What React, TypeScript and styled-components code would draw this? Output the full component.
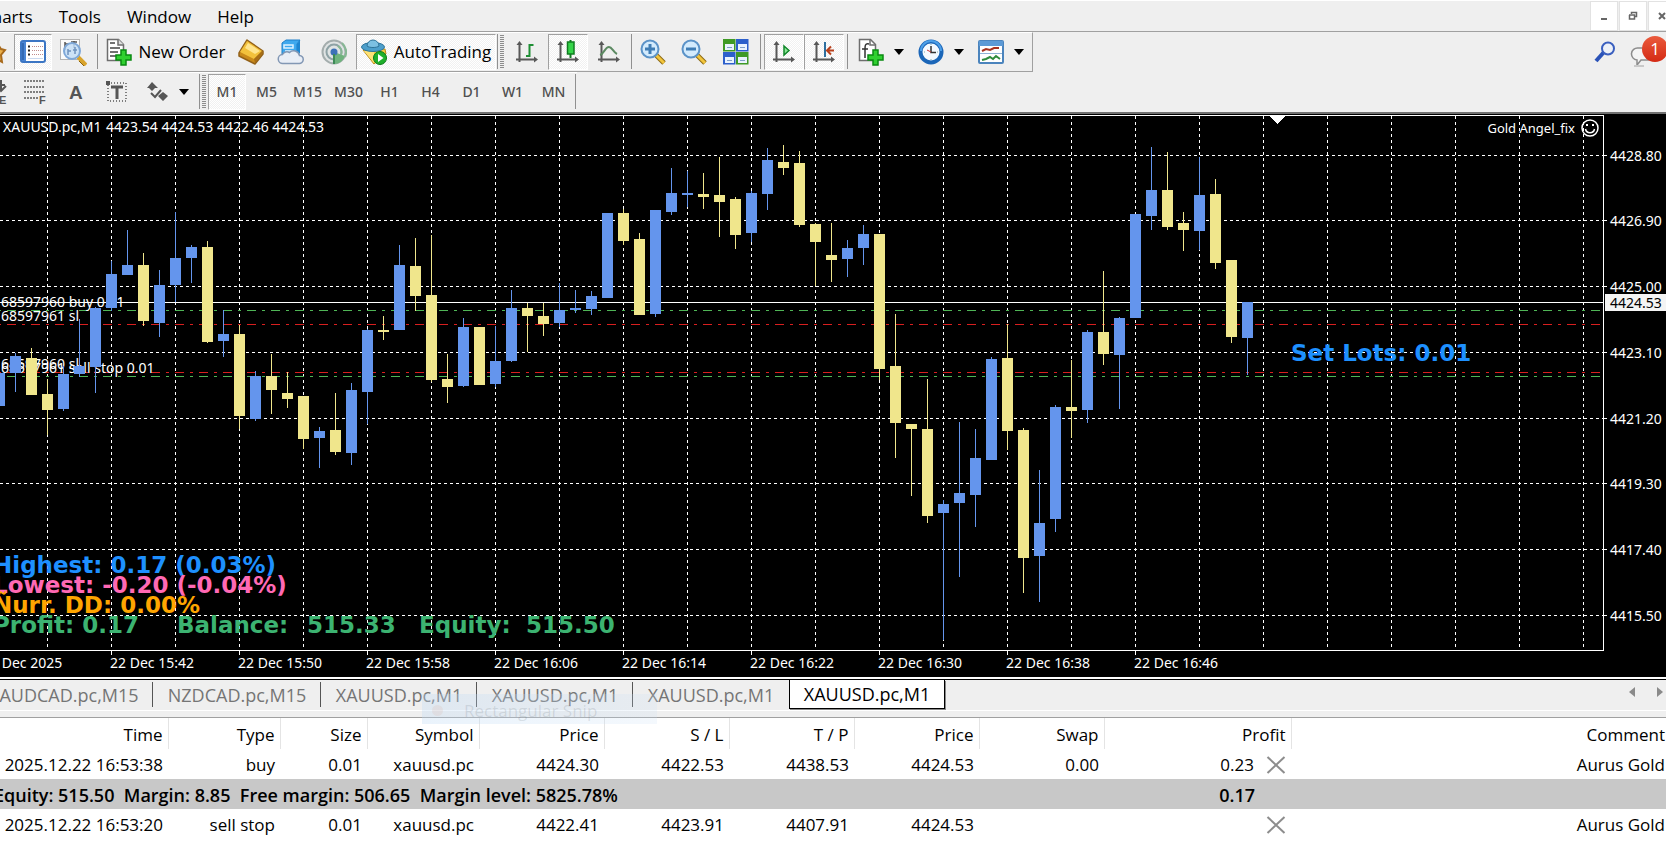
import React from "react";
import styled, { createGlobalStyle, css } from "styled-components";

const UI = `"Open Sans", "Noto Sans", sans-serif`;
const CHART = `"Noto Sans", "DejaVu Sans", sans-serif`;
const HEAVY = `"DejaVu Sans", "Liberation Sans", sans-serif`;

const Global = createGlobalStyle`
  * { box-sizing: border-box; }
  body { margin: 0; background: #fff; font-family: ${UI}; font-size: 17px; color: #000; overflow-x: hidden; }
  button { font: inherit; color: inherit; background: none; border: 0; padding: 0; margin: 0; }
  svg { display: block; flex: none; }
`;

const Page = styled.div`
  display: flex;
  flex-direction: column;
  min-height: 100vh;
  overflow: hidden;
`;

/* ---------- menu bar ---------- */

const MenuBar = styled.header`
  display: flex;
  justify-content: space-between;
  height: 32px;
  background: #efefef;
  border-top: 1px solid #fff;
  border-bottom: 1px solid #a0a0a0;
`;

const Menu = styled.nav`
  display: flex;
  gap: 26px;
  margin-left: -19px;
  padding-top: 2px;
  align-items: center;
`;

const MenuItem = styled.button`
  line-height: 28px;
`;

const WindowButtons = styled.div`
  display: flex;
  gap: 3px;
  padding-top: 1px;
  margin-right: -9px;
`;

const WindowButton = styled.button`
  display: flex;
  align-items: center;
  justify-content: center;
  width: 26px;
  height: 28px;
  background: #fff;
  outline: 1px solid #e2e2e2;
`;

/* ---------- tool bars ---------- */

const ToolRow = styled.div`
  display: flex;
  justify-content: space-between;
  background: #efefef;
`;

const Tools = styled.div<{ $boxed?: boolean }>`
  display: flex;
  align-items: center;
  height: 40px;
  padding-bottom: 2px;
  border-top: 1px solid #fff;
  ${(p) => p.$boxed && css`padding-bottom: 1px; border-bottom: 1px solid #a0a0a0; border-right: 1px solid #a0a0a0; padding-right: 1px;`}
`;

const ToolButton = styled.button<{ $w?: number; $gap?: number; $pressed?: boolean }>`
  display: flex;
  align-items: center;
  justify-content: center;
  gap: ${(p) => p.$gap ?? 6}px;
  width: ${(p) => p.$w ?? 40}px;
  height: 36px;
  flex: none;
  white-space: nowrap;
  border: 1px solid transparent;
  ${(p) =>
    p.$pressed &&
    css`
      background: repeating-conic-gradient(#f1f1f1 0 25%, #fff 0 50%) 0 0 / 2px 2px;
      border-color: #a0a0a0 #fff #fff #a0a0a0;
    `}
`;

const PeriodButton = styled(ToolButton)`
  font: 500 14px ${CHART};
  color: #505050;
`;

const Divider = styled.span<{ $gap?: number }>`
  width: 1px;
  height: 35px;
  flex: none;
  margin: 0 ${(p) => p.$gap ?? 3}px;
  background: #909090;
`;

const Grip = styled.span`
  width: 4px;
  height: 34px;
  flex: none;
  margin: 0 2px 0 1px;
  background: repeating-linear-gradient(#8c8c8c 0 1px, #efefef 1px 2px);
`;

const RightTools = styled.div`
  display: flex;
  align-items: center;
  gap: 14px;
  height: 40px;
`;

const Notify = styled.button`
  position: relative;
  width: 36px;
  height: 32px;
`;

const Bubble = styled.span`
  display: block;
  padding-top: 10px;
`;

const Badge = styled.span`
  position: absolute;
  left: 12px;
  top: 0;
  width: 26px;
  height: 26px;
  border-radius: 50%;
  background: linear-gradient(#ea5a3c, #d42a14);
  color: #fff;
  font-size: 17px;
  line-height: 26px;
  text-align: center;
`;

/* ---------- chart ---------- */

const ChartFrame = styled.main`
  display: grid;
  grid-template-columns: minmax(0, 1fr) 63px;
  height: 567px;
  background: #000;
  border-top: 2px solid #707070;
  border-bottom: 2px solid #fff;
`;

const Plot = styled.div`
  position: relative;
  min-width: 0;
`;

const PlotHead = styled.div`
  position: absolute;
  right: 4px;
  top: 5px;
  display: flex;
  align-items: center;
  gap: 6px;
  font: 13px/18px ${CHART};
  color: #fff;
`;

const Fill = styled.svg`
  width: 100%;
  height: 563px;
`;

/* ---------- chart tabs ---------- */

const TabStrip = styled.div`
  display: flex;
  justify-content: space-between;
  height: 32px;
  background: #efefef;
  border-top: 1px solid #000;
  border-bottom: 1px solid #fff;
`;

const Tabs = styled.div`
  display: flex;
  margin-left: -15px;
`;

const Tab = styled.button<{ $w?: number; $active?: boolean }>`
  position: relative;
  width: ${(p) => p.$w ?? 156}px;
  height: 29px;
  font-size: 18px;
  line-height: 26px;
  color: ${(p) => (p.$active ? "#000" : "#757575")};
  ${(p) =>
    p.$active
      ? css`background: #fff; border: 1px solid #000; border-top: 0; box-shadow: 1px 1px 0 #888;`
      : css`&:not(:nth-last-child(2))::after { content: ""; position: absolute; right: 0; top: 2px; width: 1px; height: 25px; background: #555; }`}
`;

const TabScroll = styled.div`
  display: flex;
  align-items: center;
  gap: 22px;
  padding: 0 3px 6px 0;
`;

const SnipGhost = styled.div`
  position: absolute;
  left: 422px;
  top: 694px;
  width: 235px;
  height: 30px;
  padding-left: 42px;
  line-height: 34px;
  color: rgba(90, 100, 110, 0.17);
  background: linear-gradient(90deg, rgba(190, 218, 245, 0.32), rgba(200, 222, 245, 0.2));
  pointer-events: none;
  &::before { content: ""; position: absolute; left: 10px; top: 11px; width: 11px; height: 11px; border-radius: 50%; background: rgba(220, 170, 150, 0.16); }
`;

/* ---------- trade table ---------- */

const Terminal = styled.section`
  border-top: 1px solid #a0a0a0;
  margin-top: 6px;
  background: #fff;
`;

const Gap = styled.div`
  background: #efefef;
`;

const Trades = styled.table`
  width: 100%;
  table-layout: fixed;
  border-collapse: collapse;
  text-align: right;
  white-space: nowrap;
  th, td { height: 30px; padding: 2px 5px 0 0; font-weight: 400; line-height: 24px; }
  th { height: 31px; border-right: 1px solid #e4e4e4; }
  th:last-child { border-right: 0; }
  th:last-child, td:last-child { padding-right: 1px; }
`;

const SummaryRow = styled.tr`
  background: #c8c8c8;
  td { font-weight: 600; font-size: 18px; }
  td:first-child { text-align: left; text-indent: -6px; white-space: pre; }
  td:nth-child(2) { padding-right: 36px; }
`;

const ProfitCell = styled.div`
  display: flex;
  align-items: center;
  justify-content: flex-end;
  gap: 12px;
`;

/* ---------- icons ---------- */

const Ico = ({ children, w = 26, h = 26 }: { children: React.ReactNode; w?: number; h?: number }) => (
  <svg width={w} height={h} viewBox={`0 0 ${w} ${h}`} fill="none" aria-hidden="true">
    {children}
  </svg>
);

const FavIcon = () => (
  <Ico w={14}>
    <path d="M-6 8l5-1 2 3 4 1-4 5 1 7-6-3-4 2z" fill="#eab04a" stroke="#a86a1c" strokeWidth="2" />
  </Ico>
);
const NavigatorIcon = () => (
  <Ico>
    <rect x="1" y="2" width="24" height="21" rx="2" fill="#fff" stroke="#3c76c4" strokeWidth="2" />
    <rect x="2" y="3" width="4" height="19" fill="#4a86d6" />
    <path d="M3 4v17" stroke="#1d4e92" strokeWidth="1" />
    <path d="M8 7.500h2M8 11.500h2M8 15.500h2" stroke="#222" strokeWidth="2" />
    <path d="M12 7.500h11M12 11.500h11M12 15.500h11" stroke="#c08a8a" strokeDasharray="1 1" />
    <path d="M8 19.500h15" stroke="#c9d8ee" />
  </Ico>
);
const TesterIcon = () => (
  <Ico w={28} h={28}>
    <rect x="1.500" y="1.500" width="19" height="20" fill="#fbfbfb" stroke="#b5b5b5" />
    <path d="M6 4v8M6 6h4M15 3v7M12 4h6" stroke="#555" strokeWidth="1.500" />
    <path d="M19 19l8 8" stroke="#d8a32c" strokeWidth="4" />
    <path d="M20 23l5 5" stroke="#8a6210" strokeWidth="1" />
    <circle cx="13" cy="13" r="8" fill="#c3ddf6" fillOpacity=".85" stroke="#7fa8d8" strokeWidth="2" />
    <path d="M9 11v6M9 13h3M16 9v7M14 12h4" stroke="#6f93bf" strokeWidth="1.500" />
  </Ico>
);
const Plus = ({ x, y }: { x: number; y: number }) => (
  <path d={`M${x + 5} ${y}h5v5h5v5h-5v5h-5v-5h-5v-5h5z`} fill="#2fd02f" stroke="#0a8a12" strokeWidth="1.500" />
);
const NewOrderIcon = () => (
  <Ico w={26} h={28}>
    <path d="M1.500 1.500h11l5 5v16h-16z" fill="#fff" stroke="#6e6e6e" strokeWidth="1.500" />
    <path d="M12 1v6h6" stroke="#6e6e6e" strokeWidth="1.500" fill="#ddd" />
    <path d="M4 5h5M4 10h10M4 14h8M4 18h6" stroke="#444" strokeWidth="1.500" />
    <Plus x={10} y={12} />
  </Ico>
);
const GoldIcon = () => (
  <Ico>
    <path d="M9 1l16 11v3l-8 10L1 17v-3z" fill="#c98a1a" stroke="#93621a" strokeWidth="1.500" strokeLinejoin="round" />
    <path d="M9 2l15 10-8 8L2 13z" fill="#f2c13c" />
    <path d="M10 4l12 8-5 3L7 9z" fill="#ffe58e" />
    <path d="M16 20l8-8v3l-7 9z" fill="#a86e16" />
  </Ico>
);
const CloudIcon = () => (
  <Ico w={28}>
    <path d="M5 4l4-3h14l-3 4v11H5z" fill="#3fa9ee" stroke="#1f7fc8" />
    <path d="M20 5l3-4v13l-3 3z" fill="#1d86d2" />
    <path d="M7 6h9v3H7zM8 12h8" stroke="#dff2ff" strokeWidth="1.500" />
    <path d="M6 24.500a4.500 4.500 0 01-.5-9 5 5 0 017-2 6 6 0 0110 3 4 4 0 01-.5 8z" fill="#e9eef6" stroke="#8297b4" strokeWidth="1.500" />
  </Ico>
);
const SignalIcon = () => (
  <Ico>
    <circle cx="13" cy="13" r="11.500" fill="#dfe3e3" stroke="#a4adad" strokeWidth="2" />
    <circle cx="13" cy="13" r="7.500" stroke="#8ea2a5" strokeWidth="2" />
    <path d="M13 13l11 4a12 12 0 01-11 8z" fill="#6fb37d" />
    <path d="M17 7a7.500 7.500 0 013 9M21 4a12 12 0 013 14" stroke="#86b894" strokeWidth="2" />
    <circle cx="13" cy="13" r="3.500" fill="#3c71b8" />
    <path d="M13 15v10" stroke="#3d8a56" strokeWidth="2" />
  </Ico>
);
const AutoIcon = () => (
  <Ico w={27}>
    <path d="M2 11l22-1 1 5-12 10z" fill="#f3cb3d" stroke="#b98918" />
    <path d="M3 12l10 12V12z" fill="#ffe277" />
    <ellipse cx="12" cy="8" rx="11.500" ry="4.500" fill="#4d9fcb" stroke="#2c7399" />
    <path d="M6 7a6 6 0 0112 0c-2 2-10 2-12 0z" fill="#7cc0e2" stroke="#2c7399" />
    <circle cx="19" cy="19" r="6.500" fill="#1fb02b" stroke="#0b7a17" />
    <path d="M17 15l5.500 4-5.500 4z" fill="#fff" />
  </Ico>
);
const Axes = () => (
  <>
    <path d="M4.500 4v18M1 19.500h20" stroke="#585858" strokeWidth="2" />
    <path d="M1.500 5l3-4 3 4zM19 16.500l4 3-4 3z" fill="#585858" />
  </>
);
const BarsIcon = () => (
  <Ico w={24} h={24}>
    <Axes />
    <path d="M14.500 4v13M14.500 5h4M11 16h4" stroke="#1f8f35" strokeWidth="2" />
  </Ico>
);
const CandlesIcon = () => (
  <Ico w={24} h={24}>
    <Axes />
    <path d="M14.500 0v18" stroke="#0f7d20" strokeWidth="2" />
    <rect x="11.500" y="2" width="6.500" height="12" fill="#35d549" stroke="#0f7d20" strokeWidth="1.500" />
  </Ico>
);
const LineIcon = () => (
  <Ico w={24} h={24}>
    <Axes />
    <path d="M3 15c4-1 5-8 9-8 3 0 4 5 8 7" stroke="#5c8a62" strokeWidth="2" />
  </Ico>
);
const Lens = ({ plus }: { plus?: boolean }) => (
  <Ico>
    <path d="M16 16l8 8" stroke="#8c6a14" strokeWidth="5" />
    <path d="M16 16l8 8" stroke="#f2c53c" strokeWidth="3" />
    <circle cx="10" cy="10" r="8.500" fill="#d3ebfd" stroke="#5b93c8" strokeWidth="2" />
    <path d={plus ? "M5 10h10M10 5v10" : "M5 10h10"} stroke="#3f7db5" strokeWidth="3" />
  </Ico>
);
const TILES: [number, number, string][] = [
  [0, 0, "#3f9a26"],
  [13, 0, "#2c5fcb"],
  [0, 13, "#2c5fcb"],
  [13, 13, "#3f9a26"],
];
const TileIcon = () => (
  <Ico>
    {TILES.map(([x, y, c]) => (
      <g key={`${x}-${y}`}>
        <rect x={x} y={y} width="12.500" height="12.500" fill={c} />
        <rect x={x + 2} y={y + 5} width="9" height="6" fill="#eaf3ff" />
        <path d={`M${x + 4} ${y + 8.5}h5`} stroke="#7f9fc8" />
      </g>
    ))}
  </Ico>
);
const ScrollIcon = () => (
  <Ico w={24} h={24}>
    <Axes />
    <path d="M12 6l5 4.500-5 4.500z" fill="#8be896" stroke="#12872a" strokeWidth="1.500" />
  </Ico>
);
const ShiftIcon = () => (
  <Ico w={24} h={24}>
    <Axes />
    <path d="M13 2v15" stroke="#2f6f9f" strokeWidth="2" />
    <path d="M15 10.500h7M19 6.500l-4 4 4 4" stroke="#b8401c" strokeWidth="2" />
  </Ico>
);
const IndicatorIcon = () => (
  <Ico w={26} h={28}>
    <path d="M1.500 1.500h11l5 5v16h-16z" fill="#fff" stroke="#6e6e6e" strokeWidth="1.500" />
    <path d="M12 1v6h6" stroke="#6e6e6e" strokeWidth="1.500" />
    <path d="M11 6c-4-1-4 2-4 5v9M4 11h6" stroke="#333" strokeWidth="1.500" />
    <Plus x={10} y={12} />
  </Ico>
);
const ClockIcon = () => (
  <Ico>
    <circle cx="13" cy="13" r="10.500" fill="#f4f9ff" stroke="#1b66b8" strokeWidth="4" />
    <path d="M3 12a10 10 0 0120 0" stroke="#4d9fe8" strokeWidth="2" />
    <path d="M13 7v6.500h5" stroke="#333" strokeWidth="1.500" />
    <path d="M13 13l-4-2" stroke="#c33" />
    <path d="M13 5v1M13 20v1M6 13h1M19 13h1" stroke="#8aa" />
  </Ico>
);
const TemplateIcon = () => (
  <Ico>
    <rect x="1" y="2" width="24" height="22" rx="1" fill="#fff" stroke="#4b84bd" strokeWidth="2" />
    <rect x="1" y="2" width="24" height="5" fill="#5c9ad6" />
    <path d="M2 14.500h22" stroke="#8fb3d6" />
    <path d="M4 12l4-2 4 1 4-2 5 0" stroke="#a8321f" strokeWidth="2" />
    <path d="M4 21l4-1 4-2 3 2 3-3 4 3" stroke="#2f8c3c" strokeWidth="2" />
  </Ico>
);
const Caret = () => (
  <Ico w={10} h={6}>
    <path d="M0 0h10L5 6z" fill="#000" />
  </Ico>
);
const SearchIcon = () => (
  <Ico w={22} h={22}>
    <path d="M10 11l-8 9" stroke="#2a52b8" strokeWidth="4" />
    <circle cx="14" cy="7.500" r="6" fill="#edf1f8" stroke="#3a5fbf" strokeWidth="2" />
  </Ico>
);
const ChatIcon = () => (
  <Ico w={24} h={22}>
    <path d="M8 2h10a6 6 0 010 12h-7l-4 5v-5a6 6 0 011-12z" fill="#f4f4f4" stroke="#8c8c8c" strokeWidth="1.500" />
    <path d="M4 20h10" stroke="#c8c8c8" strokeWidth="2" />
  </Ico>
);
const Glyph = styled.text`
  font: 700 11px "Liberation Sans", sans-serif;
  fill: #555;
`;
const BigGlyph = styled(Glyph)`
  font-size: 19px;
`;
const CyclesIcon = () => (
  <Ico w={18} h={26}>
    <path d="M3 1v10M-1 7l4 5 5-5M-2 6h9" stroke="#555" strokeWidth="2" />
    <Glyph x="1" y="25">E</Glyph>
  </Ico>
);
const FiboIcon = () => (
  <Ico w={24} h={26}>
    <path d="M1 2h21M1 8h21M1 13h21M1 19h14" stroke="#5a5a5a" strokeWidth="1.500" strokeDasharray="2 1" />
    <Glyph x="16" y="25">F</Glyph>
  </Ico>
);
const TextIcon = () => (
  <Ico w={16} h={20}>
    <BigGlyph x="1" y="17">A</BigGlyph>
  </Ico>
);
const LabelIcon = () => (
  <Ico w={22} h={24}>
    <rect x="2" y="3" width="18" height="18" stroke="#5a5a5a" strokeWidth="1.500" strokeDasharray="1 2" />
    <rect x="0" y="1" width="4" height="4" fill="#555" />
    <path d="M5 7h12M11 7v12" stroke="#555" strokeWidth="3" />
  </Ico>
);
const ShapesIcon = () => (
  <Ico w={22} h={22}>
    <path d="M0 7l5-6 6 6H8l-3 3-3-3zM11 15l5-4 5 4-5 5z" fill="#555" />
    <path d="M4 12l4 4 6-7" stroke="#555" strokeWidth="2" />
  </Ico>
);
const CloseX = () => (
  <Ico w={20} h={18}>
    <path d="M1.500 1l17 16M18.500 1l-17 16" stroke="#8d8d8d" strokeWidth="2" />
  </Ico>
);
const Smiley = () => (
  <Ico w={18} h={18}>
    <circle cx="9" cy="9" r="8" stroke="#fff" strokeWidth="1.500" />
    <path d="M4.500 10c1 5 8 5 9 0" stroke="#fff" strokeWidth="1.500" />
    <path d="M6 5v2M12 5v2" stroke="#fff" strokeWidth="2" />
  </Ico>
);

/* ---------- chart data ---------- */

const BULL = "#6495ed";
const BEAR = "#f0e68c";
const PITCH = 16;
const ORIGIN_Y = 114;

/* one bar every 16px: [rising?, high, body top, body bottom, low] */
const BARS: [number, number, number, number, number][] = [
  [1, 373, 373, 406, 406], [1, 353, 356, 373, 392], [0, 348, 358, 395, 395], [0, 379, 394, 410, 435],
  [1, 366, 374, 409, 411], [1, 319, 366, 374, 377], [1, 307, 308, 367, 393], [1, 261, 274, 308, 311],
  [1, 230, 265, 275, 275], [0, 253, 265, 321, 326], [1, 270, 285, 323, 337], [1, 212, 258, 285, 302],
  [1, 245, 247, 258, 283], [0, 241, 247, 342, 343], [1, 310, 334, 341, 357], [0, 325, 334, 416, 429],
  [1, 371, 376, 419, 421], [0, 354, 376, 390, 414], [0, 372, 393, 399, 408], [0, 396, 396, 439, 449],
  [1, 427, 431, 438, 468], [0, 393, 430, 452, 455], [1, 383, 390, 453, 465], [1, 329, 330, 392, 424],
  [0, 316, 330, 332, 340], [1, 245, 265, 330, 330], [0, 238, 266, 296, 311], [0, 235, 295, 380, 382],
  [0, 354, 379, 387, 403], [1, 318, 327, 386, 387], [0, 327, 327, 385, 385], [1, 326, 361, 384, 387],
  [1, 290, 308, 361, 362], [0, 303, 308, 316, 352], [0, 303, 316, 324, 336], [1, 283, 310, 323, 327],
  [1, 290, 308, 310, 313], [1, 291, 296, 309, 315], [1, 213, 213, 298, 298], [0, 209, 213, 241, 245],
  [0, 233, 239, 315, 315], [1, 210, 210, 314, 317], [1, 168, 193, 212, 215], [1, 171, 193, 195, 207],
  [0, 173, 194, 197, 209], [0, 157, 195, 202, 237], [0, 197, 199, 235, 249], [1, 191, 193, 233, 242],
  [1, 148, 160, 194, 210], [0, 145, 162, 168, 175], [0, 151, 163, 225, 227], [0, 223, 224, 242, 286],
  [0, 223, 255, 260, 282], [1, 240, 248, 259, 277], [1, 225, 234, 248, 265], [0, 234, 234, 369, 380],
  [0, 314, 366, 423, 458], [0, 424, 424, 429, 496], [0, 379, 429, 516, 523], [1, 500, 504, 513, 640],
  [1, 422, 493, 503, 577], [1, 429, 458, 495, 527], [1, 357, 359, 460, 460], [0, 324, 358, 431, 450],
  [0, 428, 430, 558, 593], [1, 470, 523, 556, 602], [1, 405, 407, 519, 532], [0, 360, 407, 411, 438],
  [1, 330, 332, 410, 423], [0, 271, 332, 354, 365], [1, 317, 318, 355, 409], [1, 214, 214, 318, 318],
  [1, 147, 190, 216, 230], [0, 152, 190, 227, 230], [0, 212, 223, 230, 251], [1, 157, 195, 231, 250],
  [0, 179, 194, 263, 269], [0, 260, 260, 337, 343], [1, 302, 302, 338, 375],
];

const PRICES: [string, number][] = [
  ["4428.80", 155], ["4426.90", 220], ["4425.00", 286], ["4423.10", 352],
  ["4421.20", 418], ["4419.30", 483], ["4417.40", 549], ["4415.50", 615],
];

const TIMES = ["22 Dec 2025", "22 Dec 15:42", "22 Dec 15:50", "22 Dec 15:58", "22 Dec 16:06", "22 Dec 16:14", "22 Dec 16:22", "22 Dec 16:30", "22 Dec 16:38", "22 Dec 16:46"];

const LEVELS: [number, string][] = [
  [310, "#4fb556"], [324, "#d81f1f"], [372, "#d81f1f"], [376, "#4fb556"],
];

const STATS: [string, number, number, string][] = [
  ["Highest: 0.17 (0.03%)", -7, 573, "#1e90ff"],
  ["Lowest: -0.20 (-0.04%)", -7, 593, "#ff69b4"],
  ["Ñurr. DD: 0.00%", -7, 613, "#ffa500"],
  ["Profit: 0.17", -7, 633, "#3cb371"],
  ["Balance:", 177, 633, "#3cb371"],
  ["515.33", 307, 633, "#3cb371"],
  ["Equity:", 419, 633, "#3cb371"],
  ["515.50", 526, 633, "#3cb371"],
  ["Set Lots: 0.01", 1291, 361, "#1e90ff"],
];

const Chart = () => (
  <ChartFrame>
    <Plot>
      <Fill role="img" aria-label="XAUUSD.pc M1 candlestick chart">
        <g transform={`translate(0 ${-ORIGIN_Y})`} shapeRendering="crispEdges">
          {Array.from({ length: 40 }, (_, i) => (
            <line key={i} x1={47.5 + i * 64} x2={47.5 + i * 64} y1="116" y2="650" stroke="#fff" strokeDasharray="3 3" />
          ))}
          {PRICES.map(([p, y]) => (
            <line key={p} x1="0" x2="100%" y1={y + 0.5} y2={y + 0.5} stroke="#fff" strokeDasharray="3 3" />
          ))}
          {LEVELS.map(([y, c]) => (
            <line key={y} x1="-17" x2="100%" y1={y + 0.5} y2={y + 0.5} stroke={c} strokeDasharray="9 6 3 6" />
          ))}
          <path d="M0 302.500H4000M0 115.500H4000M0 650.500H4000" stroke="#fff" />
          {TIMES.slice(1).map((t, i) => (
            <line key={t} x1={111.5 + i * 128} x2={111.5 + i * 128} y1="650" y2="655" stroke="#fff" />
          ))}
          <g fill="#fff" fontFamily={CHART} fontSize="14">
            <text x="1" y="307">68597960 buy 0.01</text>
            <text x="1" y="321">68597961 sl</text>
            <text x="1" y="369">68597960 sl</text>
            <text x="1" y="373">68597961 sell stop 0.01</text>
          </g>
          {BARS.map(([up, high, top, bottom, low], i) => {
            const x = i * PITCH - 1;
            const c = up ? BULL : BEAR;
            return (
              <g key={i} fill={c}>
                <rect x={x} y={high} width="1" height={low - high} />
                <rect x={x - 5} y={top} width="11" height={bottom - top} />
              </g>
            );
          })}
          <path d="M1269 116h16l-8 8z" fill="#fff" />
          <g fontFamily={HEAVY} fontWeight="700" fontSize="23">
            {STATS.map(([t, x, y, c]) => (
              <text key={t} x={x} y={y} fill={c}>{t}</text>
            ))}
          </g>
          <g fill="#fff" fontFamily={CHART} fontSize="14">
            <text x="3" y="132">XAUUSD.pc,M1</text>
            <text x="106" y="132">4423.54 4424.53 4422.46 4424.53</text>
            {TIMES.map((t, i) => (
              <text key={t} x={i * 128 - 18} y="668">{t}</text>
            ))}
          </g>
        </g>
      </Fill>
      <PlotHead>
        Gold Angel_fix <Smiley />
      </PlotHead>
    </Plot>
    <Fill role="img" aria-label="Price scale">
      <g transform={`translate(0 ${-ORIGIN_Y})`} shapeRendering="crispEdges">
        <rect x="0" y="115" width="1" height="536" fill="#fff" />
        {PRICES.map(([p, y]) => (
          <line key={p} x1="1" x2="4" y1={y + 0.5} y2={y + 0.5} stroke="#fff" />
        ))}
        <g fill="#fff" fontFamily={CHART} fontSize="14">
          {PRICES.map(([p, y]) => (
            <text key={p} x="7" y={y + 6}>{p}</text>
          ))}
        </g>
        <rect x="2" y="294" width="62" height="17" fill="#f4f4f4" />
        <text x="7" y="308" fontFamily={CHART} fontSize="14" fill="#000">4424.53</text>
      </g>
    </Fill>
  </ChartFrame>
);

const PERIODS = ["M1", "M5", "M15", "M30", "H1", "H4", "D1", "W1", "MN"];
const COLS = [168, 112, 87, 112, 125, 125, 125, 125, 125, 187];
const HEADS = ["Time", "Type", "Size", "Symbol", "Price", "S / L", "T / P", "Price", "Swap", "Profit", "Comment"];
const TRADES = [
  ["2025.12.22 16:53:38", "buy", "0.01", "xauusd.pc", "4424.30", "4422.53", "4438.53", "4424.53", "0.00", "0.23", "Aurus Gold"],
  ["2025.12.22 16:53:20", "sell stop", "0.01", "xauusd.pc", "4422.41", "4423.91", "4407.91", "4424.53", "", "", "Aurus Gold"],
];

const TradeRow = ({ cells }: { cells: string[] }) => (
  <tr>
    {cells.map((c, i) => (
      <td key={i}>
        {i === 9 ? (
          <ProfitCell>
            {c}
            <button aria-label="Close order"><CloseX /></button>
          </ProfitCell>
        ) : (
          c
        )}
      </td>
    ))}
  </tr>
);

export default function App() {
  return (
    <Page>
      <Global />
      <MenuBar>
        <Menu>
          {["Charts", "Tools", "Window", "Help"].map((m) => (
            <MenuItem key={m}>{m}</MenuItem>
          ))}
        </Menu>
        <WindowButtons>
          <WindowButton aria-label="Minimize">
            <Ico w={10} h={10}><path d="M2 8h6" stroke="#666" strokeWidth="2" /></Ico>
          </WindowButton>
          <WindowButton aria-label="Restore">
            <Ico w={10} h={10}><path d="M3.500 3V1.500h5v4H7M1 4h5.500v4H1.500V4" stroke="#666" strokeWidth="1.500" /></Ico>
          </WindowButton>
          <WindowButton aria-label="Close">
            <Ico w={10} h={10}><path d="M2 2l6 6M8 2L2 8" stroke="#666" strokeWidth="2" /></Ico>
          </WindowButton>
        </WindowButtons>
      </MenuBar>

      <ToolRow>
        <Tools $boxed>
          <ToolButton $w={14} aria-label="Favorites"><FavIcon /></ToolButton>
          <ToolButton $w={38} $pressed aria-label="Navigator"><NavigatorIcon /></ToolButton>
          <ToolButton $w={42} aria-label="Strategy tester"><TesterIcon /></ToolButton>
          <Divider />
          <ToolButton $w={130}><NewOrderIcon />New Order</ToolButton>
          <ToolButton aria-label="MetaEditor"><GoldIcon /></ToolButton>
          <ToolButton aria-label="Cloud"><CloudIcon /></ToolButton>
          <ToolButton $w={45} aria-label="Signals"><SignalIcon /></ToolButton>
          <ToolButton $w={140} $pressed><AutoIcon />AutoTrading</ToolButton>
          <Divider $gap={1} />
          <Grip />
          <ToolButton $w={42} aria-label="Bar chart"><BarsIcon /></ToolButton>
          <ToolButton $pressed aria-label="Candlesticks"><CandlesIcon /></ToolButton>
          <ToolButton $w={42} aria-label="Line chart"><LineIcon /></ToolButton>
          <Divider $gap={1} />
          <ToolButton aria-label="Zoom in"><Lens plus /></ToolButton>
          <ToolButton $w={42} aria-label="Zoom out"><Lens /></ToolButton>
          <ToolButton $w={42} aria-label="Tile windows"><TileIcon /></ToolButton>
          <Divider />
          <ToolButton $pressed aria-label="Auto scroll"><ScrollIcon /></ToolButton>
          <ToolButton $pressed aria-label="Chart shift"><ShiftIcon /></ToolButton>
          <Divider />
          <ToolButton $w={60} $gap={10} aria-label="Indicators"><IndicatorIcon /><Caret /></ToolButton>
          <ToolButton $w={60} $gap={10} aria-label="Periods"><ClockIcon /><Caret /></ToolButton>
          <ToolButton $w={60} $gap={10} aria-label="Templates"><TemplateIcon /><Caret /></ToolButton>
        </Tools>
        <RightTools>
          <button aria-label="Search"><SearchIcon /></button>
          <Notify aria-label="Notifications">
            <Bubble><ChatIcon /></Bubble>
            <Badge>1</Badge>
          </Notify>
        </RightTools>
      </ToolRow>

      <ToolRow>
        <Tools>
          <ToolButton $w={14} aria-label="Cycle lines"><CyclesIcon /></ToolButton>
          <ToolButton $w={42} aria-label="Fibonacci"><FiboIcon /></ToolButton>
          <ToolButton aria-label="Text"><TextIcon /></ToolButton>
          <ToolButton $w={42} aria-label="Text label"><LabelIcon /></ToolButton>
          <ToolButton $w={60} $gap={10} aria-label="Shapes"><ShapesIcon /><Caret /></ToolButton>
          <Divider $gap={1} />
          <Grip />
          {PERIODS.map((p) => (
            <PeriodButton key={p} $w={p === "M1" ? 38 : 41} $pressed={p === "M1"}>{p}</PeriodButton>
          ))}
          <Divider $gap={1} />
        </Tools>
      </ToolRow>

      <Chart />

      <TabStrip>
        <Tabs>
          <Tab $w={168}>AUDCAD.pc,M15</Tab>
          <Tab $w={168}>NZDCAD.pc,M15</Tab>
          <Tab>XAUUSD.pc,M1</Tab>
          <Tab>XAUUSD.pc,M1</Tab>
          <Tab>XAUUSD.pc,M1</Tab>
          <Tab $active>XAUUSD.pc,M1</Tab>
        </Tabs>
        <TabScroll>
          <button aria-label="Scroll tabs left"><Ico w={6} h={10}><path d="M6 0v10L0 5z" fill="#8a8a8a" /></Ico></button>
          <button aria-label="Scroll tabs right"><Ico w={6} h={10}><path d="M0 0v10l6-5z" fill="#8a8a8a" /></Ico></button>
        </TabScroll>
      </TabStrip>

      <Gap>
        <Terminal>
          <Trades>
            <colgroup>
              {COLS.map((w, i) => <col key={i} width={w} />)}
              <col />
            </colgroup>
            <thead>
              <tr>{HEADS.map((h, i) => <th key={i} scope="col">{h}</th>)}</tr>
            </thead>
            <tbody>
              <TradeRow cells={TRADES[0]} />
              <SummaryRow>
                <td colSpan={9}>Equity: 515.50  Margin: 8.85  Free margin: 506.65  Margin level: 5825.78%</td>
                <td>0.17</td>
                <td />
              </SummaryRow>
              <TradeRow cells={TRADES[1]} />
            </tbody>
          </Trades>
        </Terminal>
      </Gap>
      <SnipGhost>Rectangular Snip</SnipGhost>
    </Page>
  );
}
